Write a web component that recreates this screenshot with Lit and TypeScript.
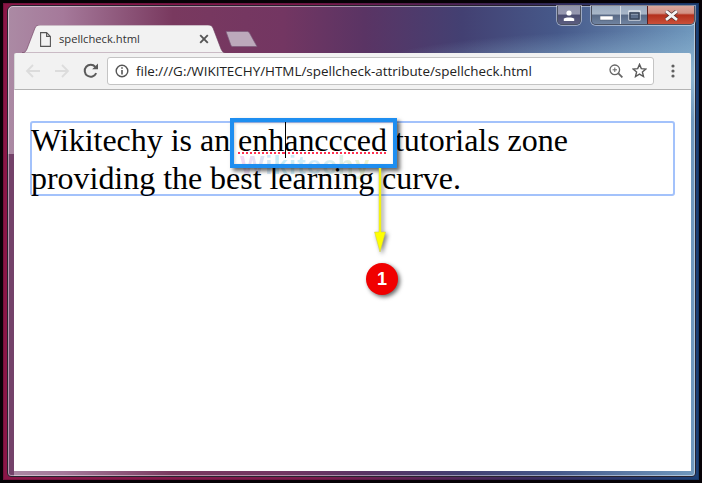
import { LitElement, html, css } from "lit";
import { customElement } from "lit/decorators.js";

@customElement("app-root")
export class AppRoot extends LitElement {
  static styles = css`
    :host { display: block; width: 702px; height: 483px; background: #060206; overflow: hidden; }
    * { box-sizing: border-box; }
    .desktop {
      position: relative; margin: 3px; width: 696px; height: 477px; padding: 2px 3px 3px 4px;
      background: linear-gradient(90deg, #8a1647 0%, #7a1a4c 45%, #3a2a5c 75%, #1b4076 100%);
      box-shadow: inset 0 0 0 1px rgba(0,0,0,.15);
    }
    .window {
      position: relative; width: 100%; height: 100%; display: flex; flex-direction: column;
      padding: 0 4px 5px 6px; border-radius: 6px 6px 4px 4px;
      border: 1px solid #26222e; outline: 1px solid rgba(255,255,255,.45); outline-offset: -2px;
      background:
        linear-gradient(180deg, rgba(118,66,100,0) 0 148px, #74426a 148px) 0 0 / 6px 100% no-repeat,
        radial-gradient(ellipse 300px 45px at 640px 70px, rgba(150,190,215,.85), rgba(150,190,215,0) 100%),
        linear-gradient(90deg, #ab8aa4 0%, #a5799a 8%, #79395f 24%, #733662 40%, #5a3464 52%, #434072 66%, #46598a 80%, #7099be 100%);
    }
    .strip { flex: 0 0 47px; display: flex; align-items: flex-end; padding-left: 8px; position: relative; }
    .tab {
      position: relative; width: 204px; height: 28px; padding: 0 0 1px 37px;
      display: flex; align-items: center;
      font: 11.2px "Open Sans", "Liberation Sans", sans-serif; color: #333;
    }
    .tab-shape { position: absolute; left: 0; top: 0; width: 100%; height: 100%; }
    .tab span { position: relative; }
    .doc { position: absolute; left: 18px; top: 7px; }
    .x { position: absolute; left: 177px; top: 9px; }
    .newtab { position: absolute; left: 211px; bottom: 6px; }
    .caption { position: absolute; top: 0; display: flex; height: 19px; border: 1px solid #4b5160; border-top: none; border-radius: 0 0 5px 5px; box-shadow: 0 0 0 1px rgba(255,255,255,.45); overflow: hidden; }
    .caption > div { display: flex; align-items: center; justify-content: center; height: 100%; background: linear-gradient(180deg, #9aabc0 0%, #a9b7c8 45%, #596a86 50%, #6f83a0 100%); }
    .profile { left: 543px; width: 24px; }
    .profile > div { width: 100%; background: linear-gradient(180deg, #8f92ab 0%, #9698b0 45%, #4a4c70 50%, #5c5e80 100%); }
    .ctrls { left: 577px; width: 104px; }
    .min { width: 29px; border-right: 1px solid #d4dbe4; }
    .max { width: 27px; border-right: 1px solid #5a2020; }
    .caption > .close { flex: 1; background: linear-gradient(180deg, #d9a69c 0%, #d29184 40%, #b4301d 50%, #c9503a 100%); }
    .min-ic { margin-top: 7px; }
    .toolbar {
      flex: 0 0 37px; background: #f2f2f2; border-bottom: 1px solid #b4b4b4; border-left: 1px solid #d8d8d8;
      display: flex; align-items: center; padding: 0 0 1px 10px; border-radius: 2px 2px 0 0;
    }
    .nav { display: flex; align-items: center; gap: 13px; }
    .omni {
      margin-left: 8px; width: 547px; height: 28px; background: #fff; border: 1px solid #c4c4c4; border-radius: 3px;
      display: flex; align-items: center; padding: 0 0 0 7px;
      font: 13.43px "Open Sans", "Liberation Sans", sans-serif; color: #222;
    }
    .url { margin-left: 7px; flex: 1; white-space: nowrap; }
    .omni-end { display: flex; align-items: center; gap: 9px; padding-right: 6px; }
    .menu { margin-left: 17px; display: flex; }
    .content { flex: 1; background: #fff; padding: 31px 16px 0 16px; position: relative; min-height: 0; }
    .editable {
      position: relative; width: 645px; height: 75px; border: 2px solid #a3c2fb; border-radius: 3px;
      font: 32px/38px "Liberation Serif", "Times New Roman", serif; color: #000; letter-spacing: -0.03px;
    }
    .lines { margin-top: -2px; margin-left: -1px; }
    .word { text-decoration: underline dotted #ff3050 2px; text-underline-offset: 1px; position: relative; }
    .caret { display: inline-block; width: 0; height: 0; position: relative; left: 1px; }
    .caret::after { content: ""; position: absolute; left: 0; top: -29px; width: 1px; height: 36px; background: #000; }
    .watermark {
      position: absolute; left: 226px; top: 60px; font: bold 26px "Liberation Sans", sans-serif; letter-spacing: 1px;
      background: linear-gradient(90deg, #f0b0e8, #90dcf0 30%, #a8dcf8 60%, #dde8a0 100%);
      -webkit-background-clip: text; background-clip: text; color: transparent; opacity: .5;
    }
    .hl {
      position: absolute; left: 216px; top: 28px; width: 167px; height: 50px; border: 4px solid #1e8ef0;
      box-shadow: 3px 3px 4px rgba(0,0,0,.6), inset 1px 1px 3px rgba(0,0,0,.2);
    }
    .arrow { position: absolute; left: 359px; top: 78px; filter: drop-shadow(2px 2px 2px rgba(0,0,0,.5)); }
    .badge {
      position: absolute; left: 352px; top: 173px; width: 32px; height: 32px; border-radius: 50%; background: #f00000;
      color: #fff; font: bold 18px/32px "Liberation Sans", sans-serif; text-align: center;
      box-shadow: 2px 2px 4px rgba(0,0,0,.6);
    }
  `;

  render() {
    return html`
      <div class="desktop">
        <div class="window">
          <div class="strip">
            <div class="tab">
              <svg class="tab-shape" viewBox="0 0 204 28" preserveAspectRatio="none">
                <path d="M0 28 C3 28 4 26 5 24 L13 3 C14 1 15 0 18 0 H186 C189 0 190 1 191 3 L199 24 C200 26 201 28 204 28 Z" fill="#f2f2f2" stroke="#6b3a5c" stroke-width=".6"/>
              </svg>
              <svg class="doc" width="11" height="15" viewBox="0 0 11 15" fill="none" stroke="#555" stroke-width="1.1">
                <path d="M.6.6H6.6L10.4 4.4V14.4H.6ZM6.6.6V4.4H10.4"/>
              </svg>
              <span>spellcheck.html</span>
              <svg class="x" width="10" height="10" viewBox="0 0 10 10" stroke="#555" stroke-width="1.9">
                <path d="M1.2 1.2L8.8 8.8M8.8 1.2L1.2 8.8"/>
              </svg>
            </div>
            <svg class="newtab" width="33" height="16" viewBox="0 0 33 16">
              <path d="M1 .5H22C23 .5 24 1 24.500 2L32 15.500H8C7 15.500 6.200 15 5.800 14Z" fill="#bca9bb" stroke="#7b5a7a" stroke-width=".7"/>
            </svg>
            <div class="caption profile">
              <div>
                <svg width="12" height="11" viewBox="0 0 12 11" fill="#fff"><circle cx="6" cy="3" r="2.6"/><path d="M.8 11V8.600C2.500 7 9.500 7 11.200 8.600V11Z"/></svg>
              </div>
            </div>
            <div class="caption ctrls">
              <div class="min"><svg class="min-ic" width="13" height="5" viewBox="0 0 13 5"><rect width="13" height="4" fill="#fff" stroke="#4a5568" stroke-width=".5"/></svg></div>
              <div class="max"><svg width="13" height="11" viewBox="0 0 13 11"><rect x="1" y="1" width="11" height="9" fill="none" stroke="#fff" stroke-width="1"/><rect x="2" y="3" width="9" height="6" fill="none" stroke="#39465c" stroke-width="1.6"/></svg></div>
              <div class="close"><svg width="15" height="11" viewBox="0 0 15 11"><path d="M2 1.200L13 9.800M13 1.200L2 9.800" stroke="#4a2a2a" stroke-width="4.200"/><path d="M2 1.200L13 9.800M13 1.200L2 9.800" stroke="#f4f4f4" stroke-width="2.800"/></svg></div>
            </div>
          </div>
          <div class="toolbar">
            <div class="nav">
              <svg width="16" height="14" viewBox="0 0 16 14" fill="none" stroke="#dcdcdc" stroke-width="1.8"><path d="M15 7H2M8 1L2 7L8 13"/></svg>
              <svg width="16" height="14" viewBox="0 0 16 14" fill="none" stroke="#dcdcdc" stroke-width="1.8"><path d="M1 7H14M8 1L14 7L8 13"/></svg>
              <svg width="16" height="16" viewBox="0 0 16 16"><path d="M13.200 10.200A6 6 0 1 1 12.300 3.800" fill="none" stroke="#5a5a5a" stroke-width="2"/><path d="M9.200 6.200H15V.6Z" fill="#5a5a5a"/></svg>
            </div>
            <div class="omni">
              <svg width="14" height="14" viewBox="0 0 14 14" fill="none" stroke="#555" stroke-width="1.4"><circle cx="7" cy="7" r="5.800"/><path d="M7 6V10.400" stroke-width="1.600"/><path d="M7 3.200V4.800" stroke-width="1.600"/></svg>
              <span class="url">file:///G:/WIKITECHY/HTML/spellcheck-attribute/spellcheck.html</span>
              <div class="omni-end">
                <svg width="14" height="14" viewBox="0 0 14 14" fill="none" stroke="#666" stroke-width="1.3"><circle cx="5.800" cy="5.800" r="4.800"/><path d="M9.400 9.400L13.400 13.400" stroke-width="1.800"/><path d="M3.600 5.800H8M5.800 3.600V8" stroke-width="1"/></svg>
                <svg width="15" height="15" viewBox="0 0 15 15" fill="none" stroke="#5a5a5a" stroke-width="1.4"><path d="M7.500 1.400L9.300 5.600L13.900 6L10.400 9L11.500 13.500L7.500 11.100L3.500 13.500L4.600 9L1.100 6L5.700 5.600Z"/></svg>
              </div>
            </div>
            <div class="menu">
              <svg width="4" height="14" viewBox="0 0 4 14" fill="#5f5f5f"><circle cx="2" cy="2" r="1.600"/><circle cx="2" cy="7" r="1.600"/><circle cx="2" cy="12" r="1.600"/></svg>
            </div>
          </div>
          <div class="content">
            <div class="watermark">Wikitechy</div>
            <div class="editable"><div class="lines">Wikitechy is an <span class="word">enh<span class="caret"></span>anccced</span> tutorials zone providing the best learning curve.</div></div>
            <div class="hl"></div>
            <svg class="arrow" width="14" height="86" viewBox="0 0 14 86">
              <path d="M6 0H8V64H12.500L7 84L1.500 64H6Z" fill="#ffff00" stroke="#c9c94a" stroke-width=".5"/>
            </svg>
            <div class="badge">1</div>
          </div>
        </div>
      </div>
    `;
  }
}
